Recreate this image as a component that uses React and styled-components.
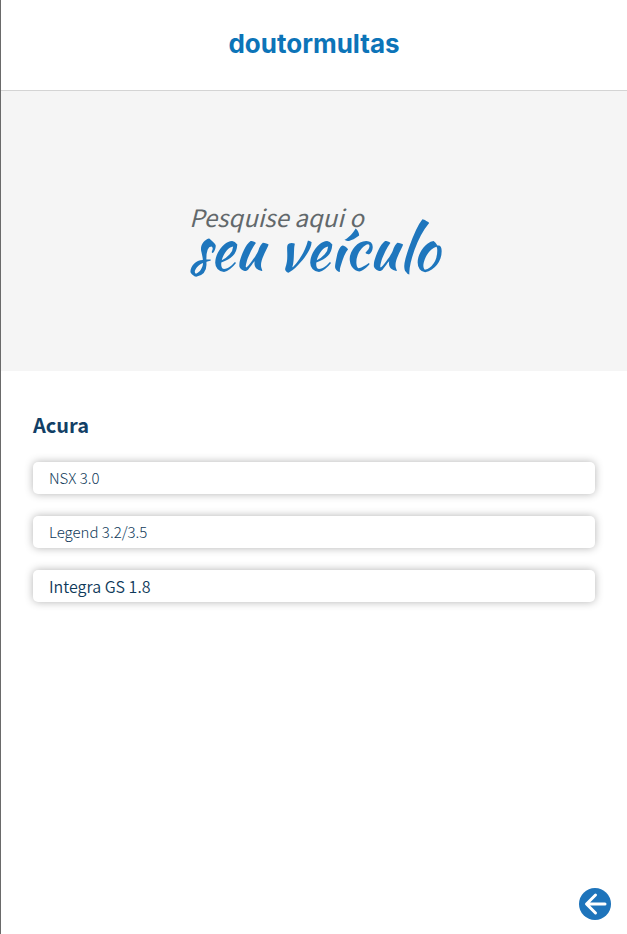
import React from "react";
import styled, { createGlobalStyle } from "styled-components";

const GlobalStyle = createGlobalStyle`
  *, *::before, *::after { box-sizing: border-box; }
  body {
    margin: 0;
    background: #fff;
    color: #14405f;
    font-family: "Source Sans Pro", "Noto Sans CJK JP", "Noto Sans", sans-serif;
  }
`;

const Page = styled.div`
  display: flex;
  flex-direction: column;
  min-height: 100vh;
  border-left: 1px solid #6a6a6a;
`;

const Header = styled.header`
  display: flex;
  justify-content: center;
  padding: 28px 16px 30px;
  border-bottom: 1px solid #d4d4d4;
`;

const Logo = styled.a`
  color: #0c74b8;
  font-family: Inter, "Liberation Sans", sans-serif;
  font-size: 26px;
  font-weight: 700;
  line-height: 32px;
  text-decoration: none;
`;

const Hero = styled.section`
  display: flex;
  justify-content: center;
  padding: 112px 16px 80px;
  background: #f5f5f5;
`;

const HeroTitle = styled.h1`
  display: flex;
  flex-direction: column;
  margin: 0;
  font-weight: 400;
`;

const Lead = styled.span`
  color: #62686b;
  font-size: 24px;
  font-style: italic;
  line-height: 28px;
`;

const Script = styled.span`
  height: 72px;
  margin-top: -12px;
  color: #1e76bd;
  font-family: "Kaushan Script", Lato, sans-serif;
  font-size: 60px;
  line-height: 60px;
`;

const Main = styled.main`
  padding: 39px 32px;
`;

const Brand = styled.h2`
  margin: 0 0 22px;
  color: #123f66;
  font-size: 20px;
  font-weight: 700;
  line-height: 30px;
`;

const ModelList = styled.ul`
  display: grid;
  gap: 22px;
  margin: 0;
  padding: 0;
  list-style: none;
`;

const ModelLink = styled.a`
  display: block;
  padding: 0 16px;
  border-radius: 5px;
  background: #fff;
  box-shadow: 0 0 8px rgba(0, 0, 0, 0.3);
  color: #0f3a5a;
  font-size: ${(p) => (p.$large ? "16px" : "15px")};
  font-weight: ${(p) => (p.$large ? 350 : 300)};
  line-height: 32px;
  text-decoration: none;
`;

const BackButton = styled.button`
  position: fixed;
  right: 16px;
  bottom: 14px;
  width: 32px;
  height: 32px;
  padding: 0;
  border: 0;
  border-radius: 50%;
  background: #1e74bb;
  cursor: pointer;

  svg { display: block; }
`;

const models = [
  { name: "NSX 3.0" },
  { name: "Legend 3.2/3.5" },
  { name: "Integra GS 1.8", large: true },
];

export default function App() {
  return (
    <>
      <GlobalStyle />
      <Page>
        <Header>
          <Logo href="#">doutormultas</Logo>
        </Header>
        <Hero>
          <HeroTitle>
            <Lead>Pesquise aqui o</Lead>
            <Script>seu veículo</Script>
          </HeroTitle>
        </Hero>
        <Main>
          <Brand>Acura</Brand>
          <ModelList>
            {models.map((m) => (
              <li key={m.name}>
                <ModelLink href="#" $large={m.large}>{m.name}</ModelLink>
              </li>
            ))}
          </ModelList>
        </Main>
        <BackButton type="button" aria-label="Voltar">
          <svg width="32" height="32" viewBox="0 0 32 32" fill="none" stroke="#fff" strokeWidth="3" strokeLinecap="round" strokeLinejoin="round">
            <path d="M26 16H8M16.500 7 7.500 16l9 9" />
          </svg>
        </BackButton>
      </Page>
    </>
  );
}
